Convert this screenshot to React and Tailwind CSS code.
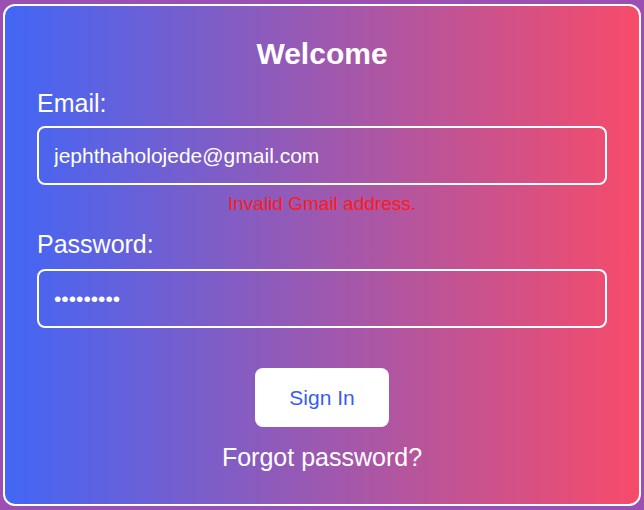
import React, { useState } from 'react';

const App = () => {
  const [email, setEmail] = useState('jephthaholojede@gmail.com');
  const [password, setPassword] = useState('123456789');

  return (
    <div className="w-[644px] h-[510px] bg-[#9c4fb3] p-[3px] pt-[4px] font-['Liberation_Sans',Arial,sans-serif]">
      <div className="h-[502px] w-[638px] rounded-[12px] border-2 border-white bg-[linear-gradient(to_right,#4266f6,#f74b6a)] px-8 pt-[31px] flex flex-col">
        <h1 className="text-center text-[30px] leading-[34px] font-bold text-white">Welcome</h1>

        <label className="mt-[18px] text-[25px] leading-[29px] text-white">Email:</label>
        <input
          type="email"
          value={email}
          onChange={(e) => setEmail(e.target.value)}
          className="mt-[8px] h-[59px] w-full rounded-[8px] border-2 border-white bg-transparent px-[15px] text-[21px] text-white outline-none"
        />
        <p className="mt-[8px] text-center text-[19px] leading-[22px] text-[#ff1a1a]">Invalid Gmail address.</p>

        <label className="mt-[15px] text-[25px] leading-[29px] text-white">Password:</label>
        <input
          type="password"
          value={password}
          onChange={(e) => setPassword(e.target.value)}
          className="mt-[10px] h-[59px] w-full rounded-[8px] border-2 border-white bg-transparent px-[15px] text-[21px] text-white outline-none"
        />

        <div className="mt-[40px] flex justify-center">
          <button className="h-[59px] w-[134px] rounded-[8px] bg-white text-[21px] text-[#3b5cf4]">
            Sign In
          </button>
        </div>
        <p className="mt-[16px] text-center text-[25px] leading-[29px] text-white">Forgot password?</p>
      </div>
    </div>
  );
};

export default App;
